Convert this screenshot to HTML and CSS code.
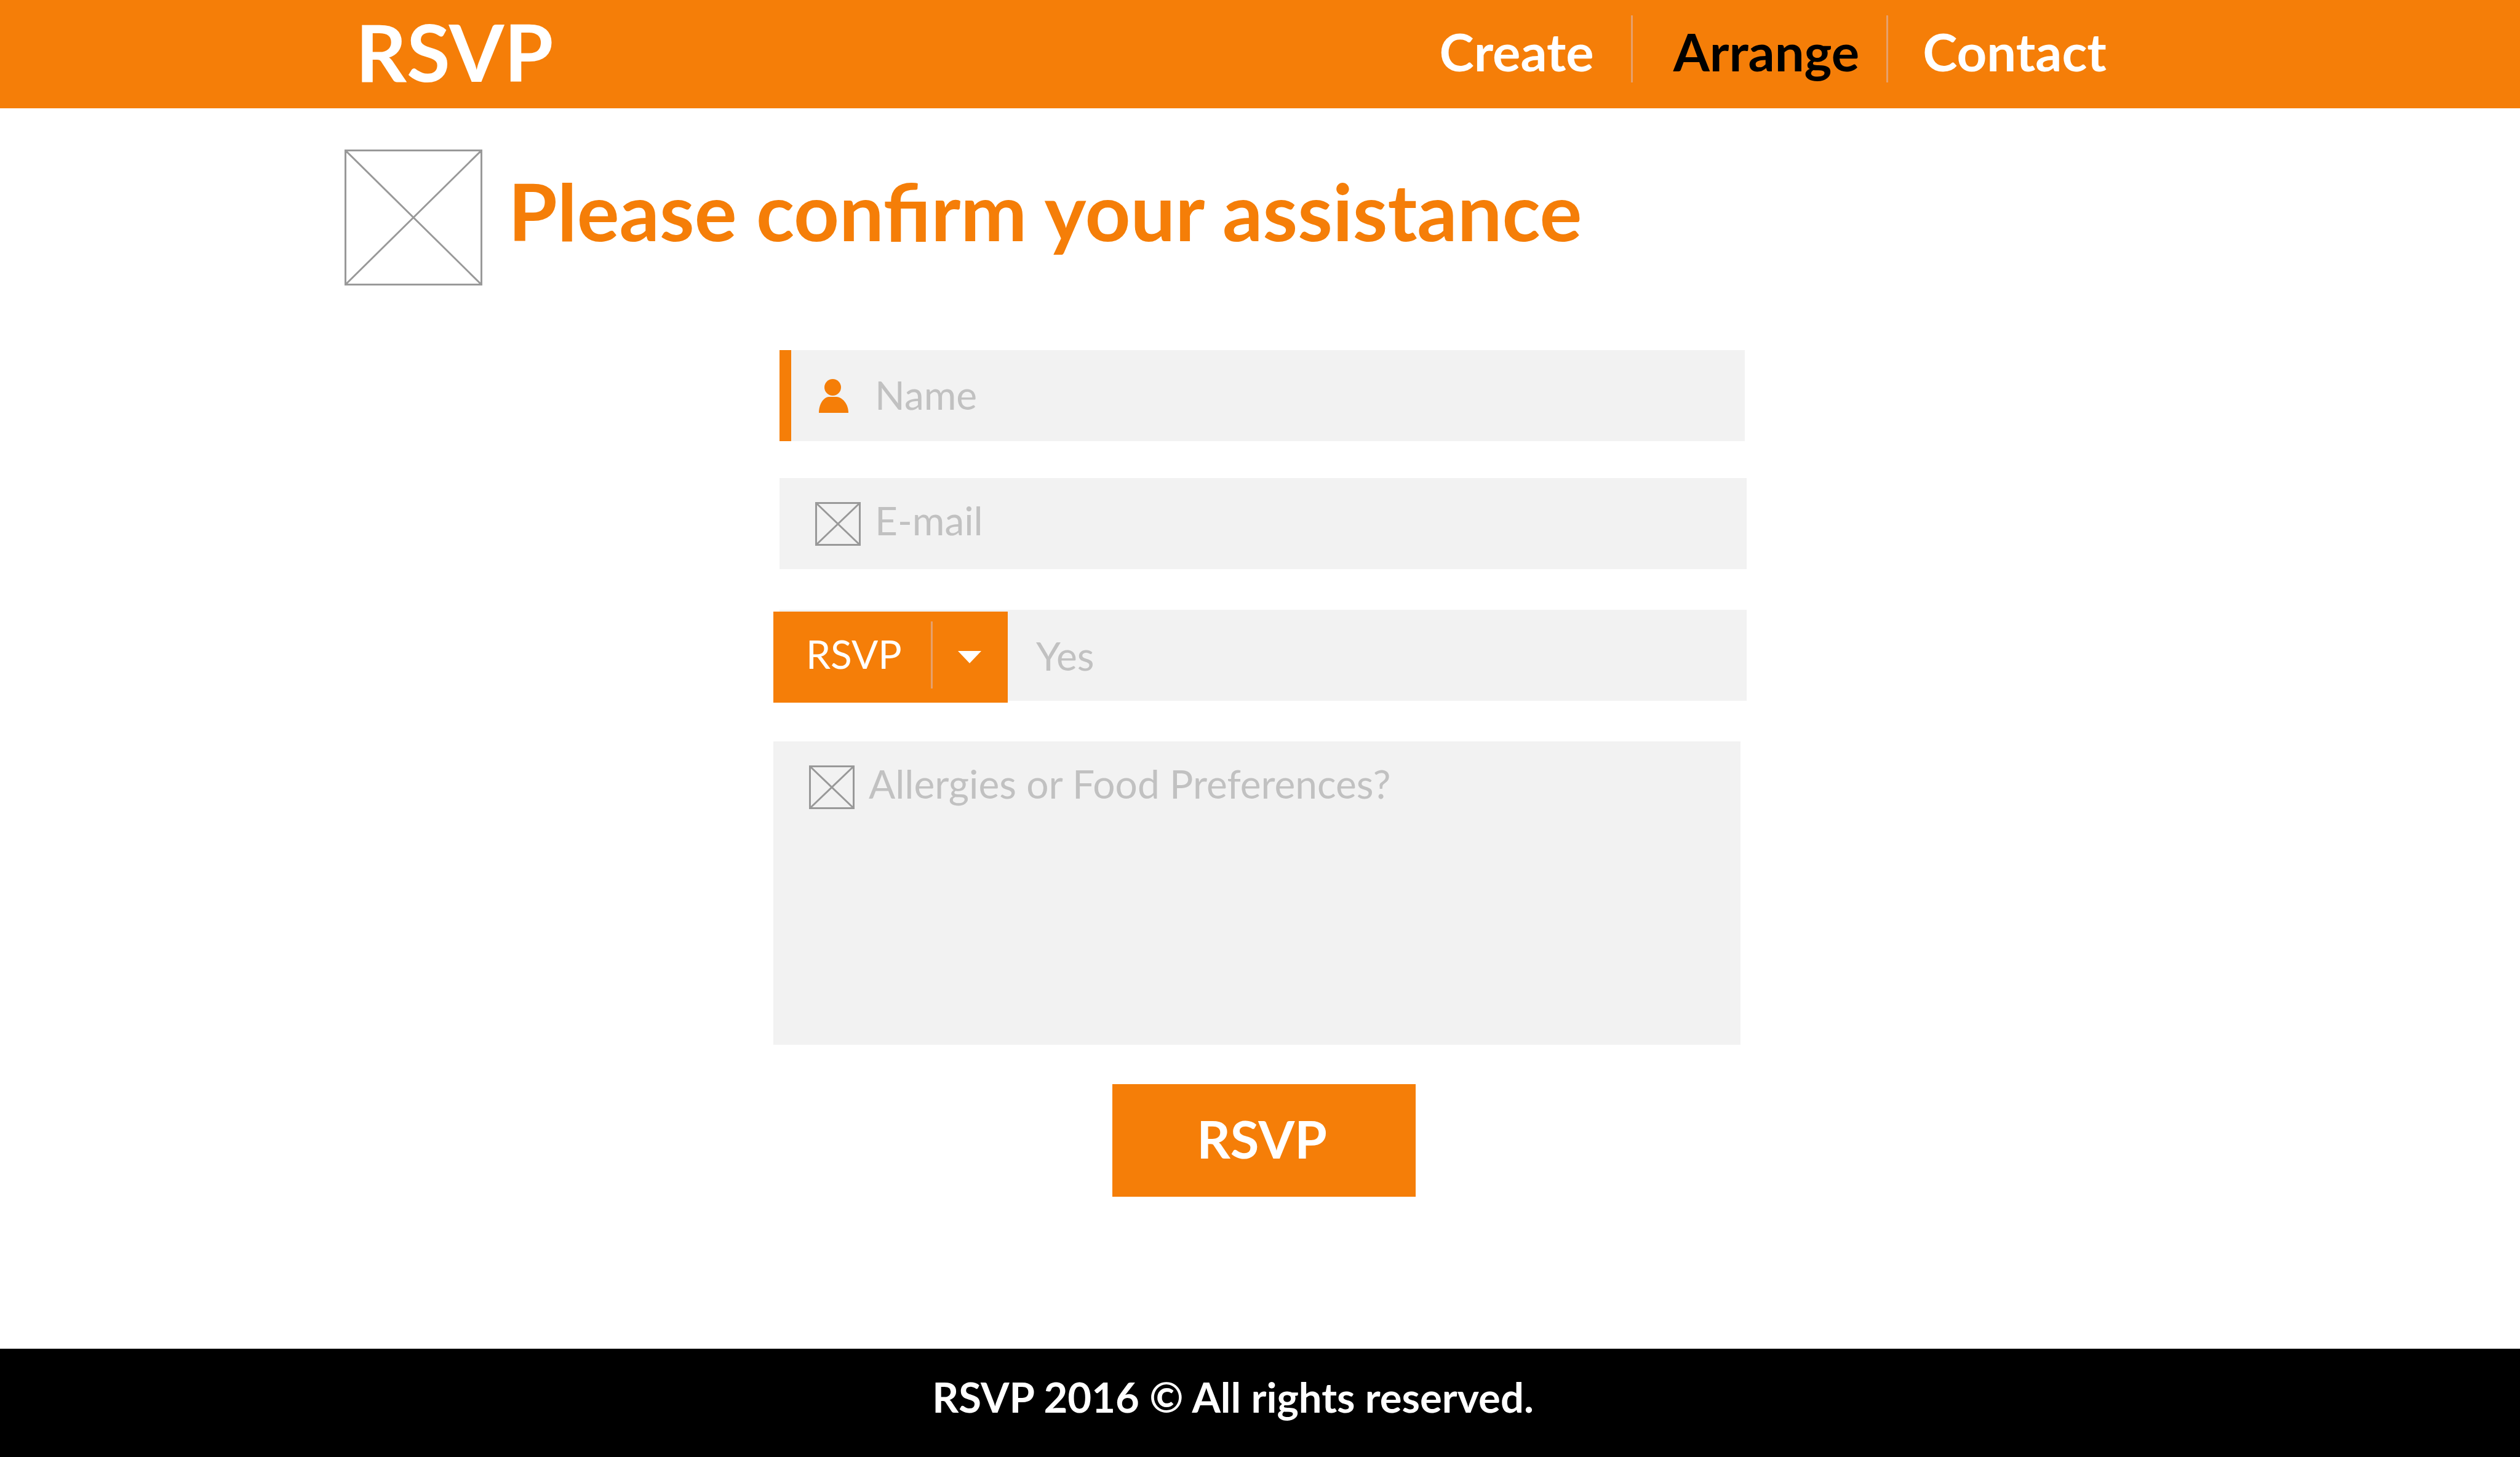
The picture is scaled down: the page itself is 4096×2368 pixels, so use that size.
FILE: index.html
```html
<!DOCTYPE html>
<html lang="en">
<head>
  <meta charset="utf-8">
  <meta name="viewport" content="width=device-width, initial-scale=1">
  <title>RSVP</title>
  <link rel="stylesheet" href="styles.css">
</head>
<body>
  <header class="site-header">
    <div class="wrap header-inner">
      <a class="logo" href="#">RSVP</a>
      <nav class="site-nav" aria-label="Main">
        <a class="nav-link" href="#create">Create</a>
        <a class="nav-link nav-link-active" href="#arrange" aria-current="page">Arrange</a>
        <a class="nav-link" href="#contact">Contact</a>
      </nav>
    </div>
  </header>

  <main class="wrap main">
    <div class="intro">
      <svg class="intro-image" viewBox="0 0 224 221" aria-hidden="true">
        <path d="M1.500 1.500H222.500V219.500H1.500ZM1.500 1.500L222.500 219.500M222.500 1.500L1.500 219.500"/>
      </svg>
      <h1 class="intro-title">Please confirm your assistance</h1>
    </div>

    <form class="rsvp-form">
      <div class="field field-name">
        <label class="field-label" for="name" aria-label="Name">
          <svg class="icon-user" viewBox="0 0 74 70" aria-hidden="true">
            <ellipse cx="28.500" cy="21.500" rx="13.500" ry="13.500"/>
            <path d="M6 63C6 49 13 38 22 37H35C45 38 54 49 54 63Z"/>
          </svg>
        </label>
        <input class="field-input" id="name" type="text" placeholder="Name">
      </div>

      <div class="field field-email">
        <label class="field-label" for="email" aria-label="E-mail">
          <svg class="icon-box" viewBox="0 0 74 71" aria-hidden="true">
            <path d="M1.500 1.500H72.500V69.500H1.500ZM1.500 1.500L72.500 69.500M72.500 1.500L1.500 69.500"/>
          </svg>
        </label>
        <input class="field-input" id="email" type="email" placeholder="E-mail">
      </div>

      <div class="field field-answer">
        <div class="picker">
          <select class="picker-select" aria-label="RSVP">
            <option>RSVP</option>
          </select>
          <svg class="picker-arrow" viewBox="0 0 38 20" aria-hidden="true"><path d="M0 0H38L19 20Z"/></svg>
        </div>
        <input class="field-input" type="text" placeholder="Yes" aria-label="Answer">
      </div>

      <div class="field field-notes">
        <label class="field-label" for="notes" aria-label="Allergies or Food Preferences?">
          <svg class="icon-box" viewBox="0 0 74 71" aria-hidden="true">
            <path d="M1.500 1.500H72.500V69.500H1.500ZM1.500 1.500L72.500 69.500M72.500 1.500L1.500 69.500"/>
          </svg>
        </label>
        <textarea class="field-input" id="notes" placeholder="Allergies or Food Preferences?"></textarea>
      </div>

      <div class="actions">
        <button class="submit" type="submit">RSVP</button>
      </div>
    </form>
  </main>

  <footer class="site-footer">
    <p class="footer-text">RSVP 2016 © All rights reserved.</p>
  </footer>
</body>
</html>
```
FILE: styles.css
```css
:root {
  --accent: #f57e08;
  --divider: #e6a06c;
  --field: #f2f2f2;
  --hint: #c1c1c1;
  --line: #999999;
}

* {
  box-sizing: border-box;
}

body {
  display: flex;
  flex-direction: column;
  min-height: 100vh;
  margin: 0;
  background: #ffffff;
  font-family: Lato, "Liberation Sans", sans-serif;
  font-size: 64px;
  line-height: 77px;
}

.wrap {
  width: 100%;
  max-width: 2976px;
  margin: 0 auto;
}

/* Header */
.site-header {
  background: var(--accent);
}

.header-inner {
  display: flex;
  justify-content: space-between;
  align-items: flex-start;
  min-height: 176px;
  padding: 0 112px 0 18px;
}

.logo {
  padding-top: 6px;
  color: #ffffff;
  font-size: 129px;
  font-weight: 700;
  line-height: 154px;
  text-decoration: none;
}

.site-nav {
  display: flex;
  padding-top: 25px;
}

.nav-link {
  padding: 8px 44px 0 66px;
  border-left: 3px solid var(--divider);
  color: #ffffff;
  font-size: 85px;
  font-weight: 700;
  line-height: 101px;
  text-decoration: none;
}

.nav-link:first-child {
  padding-left: 0;
  padding-right: 60px;
  border-left: 0;
}

.nav-link:last-child {
  padding-left: 56px;
  padding-right: 0;
}

.nav-link-active {
  color: #000000;
}

/* Intro */
.main {
  padding-top: 67px;
  padding-bottom: 120px;
}

.intro {
  display: flex;
  align-items: center;
  gap: 42px;
}

.intro-image {
  flex: none;
  width: 224px;
  height: 221px;
  fill: none;
  stroke: var(--line);
  stroke-width: 3;
}

.intro-title {
  margin: 0;
  padding-bottom: 24px;
  color: var(--accent);
  font-size: 129px;
  font-weight: 700;
  line-height: 154px;
}

/* Form */
.rsvp-form {
  max-width: 1582px;
  margin: 105px auto 0;
}

.field {
  display: flex;
  min-height: 148px;
  margin-left: 10px;
  background: var(--field);
}

.field-label {
  display: flex;
  flex: none;
  align-items: center;
  padding: 0 23px 0 58px;
}

.field-input {
  flex: 1;
  min-width: 0;
  margin: 0;
  padding: 0;
  border: 0;
  border-radius: 0;
  outline: 0;
  background: transparent;
  color: #333333;
  font: inherit;
  resize: none;
}

.field-input::placeholder {
  color: var(--hint);
  opacity: 1;
}

.field-name {
  margin-right: 3px;
  border-left: 19px solid var(--accent);
}

.field-name .field-label {
  padding-left: 39px;
}

.field-name .field-input {
  padding-bottom: 4px;
}

.field-email {
  margin-top: 60px;
}

.field-email .field-input {
  padding-bottom: 12px;
}

.icon-user {
  width: 74px;
  height: 70px;
  fill: var(--accent);
}

.icon-box {
  width: 74px;
  height: 71px;
  fill: none;
  stroke: var(--line);
  stroke-width: 3;
}

.field-answer {
  margin-top: 66px;
}

.field-answer .field-input {
  padding-left: 46px;
}

.picker {
  position: relative;
  flex: none;
  width: 381px;
  height: 148px;
  margin: 3px 0 -3px -10px;
  background: var(--accent);
}

.picker::after {
  position: absolute;
  top: 16px;
  right: 122px;
  width: 3px;
  height: 109px;
  background: var(--divider);
  content: "";
  pointer-events: none;
}

.picker-select {
  width: 100%;
  height: 100%;
  padding: 0 125px 12px 53px;
  border: 0;
  border-radius: 0;
  outline: 0;
  appearance: none;
  background: transparent;
  color: #ffffff;
  font: inherit;
}

.picker-arrow {
  position: absolute;
  top: 64px;
  right: 43px;
  width: 38px;
  height: 20px;
  fill: #ffffff;
  pointer-events: none;
}

.field-notes {
  min-height: 493px;
  margin: 66px 10px 0 0;
}

.field-notes .field-label {
  align-items: flex-start;
  padding-top: 39px;
}

.field-notes .field-input {
  padding-top: 30px;
}

.actions {
  display: flex;
  justify-content: center;
  margin-top: 64px;
  padding-left: 12px;
}

.submit {
  width: 493px;
  height: 183px;
  padding: 0 6px 8px 0;
  border: 0;
  background: var(--accent);
  color: #ffffff;
  font-family: inherit;
  font-size: 85px;
  font-weight: 700;
  line-height: 100px;
}

/* Footer */
.site-footer {
  min-height: 176px;
  margin-top: auto;
  padding: 37px 88px 0 0;
  background: #000000;
  color: #ffffff;
  text-align: center;
}

.footer-text {
  margin: 0;
  font-size: 67px;
  font-weight: 700;
  line-height: 82px;
}
```
